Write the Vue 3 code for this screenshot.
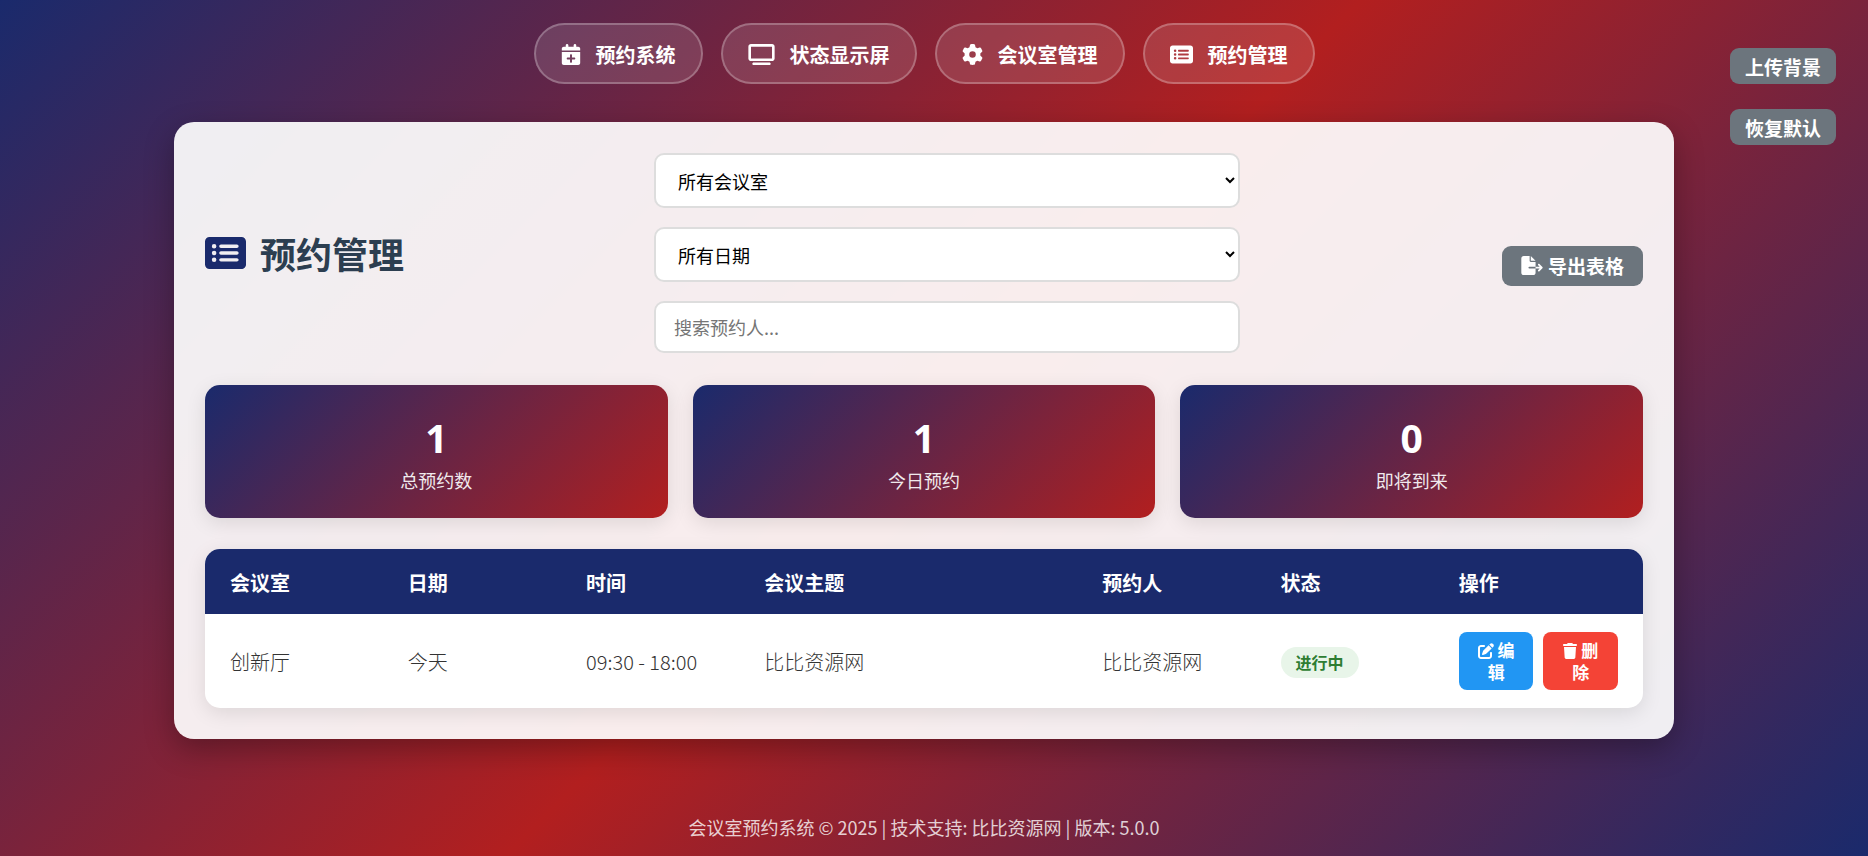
<script setup>
import { ref } from 'vue'

const icons = {
  calendar: {
    box: '0 0 448 512',
    path: 'M96 32V64H48C21.5 64 0 85.5 0 112v48H448V112c0-26.5-21.5-48-48-48H352V32c0-17.7-14.3-32-32-32s-32 14.3-32 32V64H160V32c0-17.7-14.3-32-32-32S96 14.3 96 32zM448 192H0V464c0 26.5 21.5 48 48 48H400c26.5 0 48-21.5 48-48V192zM224 248c13.3 0 24 10.7 24 24v56h56c13.3 0 24 10.7 24 24s-10.7 24-24 24H248v56c0 13.3-10.7 24-24 24s-24-10.7-24-24V376H144c-13.3 0-24-10.7-24-24s10.7-24 24-24h56V272c0-13.3 10.7-24 24-24z'
  },
  tv: {
    box: '0 0 640 512',
    path: 'M64 64V352H576V64H64zM0 64C0 28.7 28.7 0 64 0H576c35.3 0 64 28.7 64 64V352c0 35.3-28.7 64-64 64H64c-35.3 0-64-28.7-64-64V64zM128 448H512c17.7 0 32 14.3 32 32s-14.3 32-32 32H128c-17.7 0-32-14.3-32-32s14.3-32 32-32z'
  },
  gear: {
    box: '0 0 512 512',
    path: 'M495.9 166.6c3.2 8.7 .5 18.4-6.4 24.6l-43.3 39.4c1.1 8.3 1.7 16.8 1.7 25.4s-.6 17.1-1.7 25.4l43.3 39.4c6.9 6.2 9.6 15.9 6.4 24.6c-4.4 11.9-9.7 23.3-15.8 34.3l-4.7 8.1c-6.6 11-14 21.4-22.1 31.2c-5.9 7.2-15.7 9.6-24.5 6.8l-55.7-17.7c-13.4 10.3-28.2 18.9-44 25.4l-12.5 57.1c-2 9.1-9 16.3-18.2 17.8c-13.8 2.3-28 3.5-42.5 3.5s-28.7-1.2-42.5-3.5c-9.2-1.5-16.2-8.7-18.2-17.8l-12.5-57.1c-15.8-6.5-30.6-15.1-44-25.4L83.1 425.9c-8.8 2.8-18.6 .3-24.5-6.8c-8.1-9.8-15.5-20.2-22.1-31.2l-4.7-8.1c-6.1-11-11.4-22.4-15.8-34.3c-3.2-8.7-.5-18.4 6.4-24.6l43.3-39.4C64.6 273.1 64 264.6 64 256s.6-17.1 1.7-25.4L22.4 191.2c-6.9-6.2-9.6-15.9-6.4-24.6c4.4-11.9 9.7-23.3 15.8-34.3l4.7-8.1c6.6-11 14-21.4 22.1-31.2c5.9-7.2 15.7-9.6 24.5-6.8l55.7 17.7c13.4-10.3 28.2-18.9 44-25.4l12.5-57.1c2-9.1 9-16.3 18.2-17.8C227.3 1.2 241.5 0 256 0s28.7 1.2 42.5 3.5c9.2 1.5 16.2 8.7 18.2 17.8l12.5 57.1c15.8 6.5 30.6 15.1 44 25.4l55.7-17.7c8.8-2.8 18.6-.3 24.5 6.8c8.1 9.8 15.5 20.2 22.1 31.2l4.7 8.1c6.1 11 11.4 22.4 15.8 34.3zM256 336a80 80 0 1 0 0-160 80 80 0 1 0 0 160z'
  },
  list: {
    box: '0 0 576 512',
    path: 'M0 96C0 60.7 28.7 32 64 32H512c35.3 0 64 28.7 64 64V416c0 35.3-28.7 64-64 64H64c-35.3 0-64-28.7-64-64V96zM128 288a32 32 0 1 0 0-64 32 32 0 1 0 0 64zm32-128a32 32 0 1 0 -64 0 32 32 0 1 0 64 0zM128 384a32 32 0 1 0 0-64 32 32 0 1 0 0 64zm96-248c-13.3 0-24 10.7-24 24s10.7 24 24 24H448c13.3 0 24-10.7 24-24s-10.7-24-24-24H224zm0 96c-13.3 0-24 10.7-24 24s10.7 24 24 24H448c13.3 0 24-10.7 24-24s-10.7-24-24-24H224zm0 96c-13.3 0-24 10.7-24 24s10.7 24 24 24H448c13.3 0 24-10.7 24-24s-10.7-24-24-24H224z'
  }
}

const navItems = [
  { label: '预约系统', icon: 'calendar' },
  { label: '状态显示屏', icon: 'tv' },
  { label: '会议室管理', icon: 'gear' },
  { label: '预约管理', icon: 'list' }
]

const stats = [
  { value: 1, label: '总预约数' },
  { value: 1, label: '今日预约' },
  { value: 0, label: '即将到来' }
]

const columns = ['会议室', '日期', '时间', '会议主题', '预约人', '状态', '操作']

const bookings = [
  {
    room: '创新厅',
    date: '今天',
    time: '09:30 - 18:00',
    topic: '比比资源网',
    person: '比比资源网',
    status: '进行中'
  }
]

const room = ref('all')
const date = ref('all')
const keyword = ref('')
</script>

<template>
  <div class="page">
    <nav class="nav">
      <a v-for="item in navItems" :key="item.label" class="nav-link" href="#">
        <svg class="nav-icon" :class="item.icon" :viewBox="icons[item.icon].box" aria-hidden="true">
          <path :d="icons[item.icon].path" />
        </svg>
        <span>{{ item.label }}</span>
      </a>
    </nav>

    <div class="background-tools">
      <button class="tool-button" type="button">上传背景</button>
      <button class="tool-button" type="button">恢复默认</button>
    </div>

    <main class="panel">
      <header class="panel-header">
        <h1 class="title">
          <svg class="title-icon" viewBox="0 32 576 448" aria-hidden="true">
            <path :d="icons.list.path" />
          </svg>
          <span>预约管理</span>
        </h1>
        <div class="filters">
          <select v-model="room" class="field" aria-label="会议室">
            <option value="all">所有会议室</option>
            <option value="cx">创新厅</option>
          </select>
          <select v-model="date" class="field" aria-label="日期">
            <option value="all">所有日期</option>
            <option value="today">今天</option>
          </select>
          <input v-model="keyword" class="field search" type="text" placeholder="搜索预约人..." aria-label="搜索预约人" />
        </div>
        <button class="tool-button export" type="button">
          <svg class="export-icon" viewBox="0 0 576 512" aria-hidden="true">
            <path d="M0 64C0 28.7 28.7 0 64 0H224V128c0 17.7 14.3 32 32 32H384V288H216c-13.3 0-24 10.7-24 24s10.7 24 24 24H384V448c0 35.3-28.7 64-64 64H64c-35.3 0-64-28.7-64-64V64zM384 336V288H494.1l-39-39c-9.4-9.4-9.4-24.6 0-33.9s24.6-9.4 33.9 0l80 80c9.4 9.4 9.4 24.6 0 33.9l-80 80c-9.4 9.4-24.6 9.4-33.9 0s-9.4-24.6 0-33.9l39-39H384zm0-208H256V0L384 128z" />
          </svg>
          <span>导出表格</span>
        </button>
      </header>

      <section class="stats">
        <div v-for="stat in stats" :key="stat.label" class="stat">
          <div class="stat-value">{{ stat.value }}</div>
          <div class="stat-label">{{ stat.label }}</div>
        </div>
      </section>

      <div class="table-card">
        <table class="table">
          <colgroup>
            <col class="col-first" />
            <col class="col" />
            <col class="col" />
            <col class="col-wide" />
            <col class="col" />
            <col class="col" />
            <col />
          </colgroup>
          <thead>
            <tr>
              <th v-for="column in columns" :key="column" scope="col">{{ column }}</th>
            </tr>
          </thead>
          <tbody>
            <tr v-for="booking in bookings" :key="booking.room">
              <td>{{ booking.room }}</td>
              <td>{{ booking.date }}</td>
              <td>{{ booking.time }}</td>
              <td>{{ booking.topic }}</td>
              <td>{{ booking.person }}</td>
              <td><span class="status">{{ booking.status }}</span></td>
              <td>
                <div class="actions">
                  <button class="action edit" type="button">
                    <svg class="action-icon" viewBox="0 0 512 512" aria-hidden="true">
                      <path d="M471.6 21.7c-21.9-21.9-57.3-21.9-79.2 0L362.3 51.7l97.9 97.9 30.1-30.1c21.9-21.9 21.9-57.3 0-79.2L471.6 21.7zm-299.2 220c-6.1 6.1-10.8 13.6-13.5 21.9l-29.6 88.8c-2.9 8.6-.6 18.1 5.8 24.6s15.9 8.7 24.6 5.8l88.8-29.6c8.2-2.7 15.7-7.4 21.9-13.5L437.7 172.3 339.7 74.3 172.4 241.7zM96 64C43 64 0 107 0 160V416c0 53 43 96 96 96H352c53 0 96-43 96-96V320c0-17.7-14.3-32-32-32s-32 14.3-32 32v96c0 17.7-14.3 32-32 32H96c-17.7 0-32-14.3-32-32V160c0-17.7 14.3-32 32-32h96c17.7 0 32-14.3 32-32s-14.3-32-32-32H96z" />
                    </svg>
                    编辑
                  </button>
                  <button class="action delete" type="button">
                    <svg class="action-icon narrow" viewBox="0 0 448 512" aria-hidden="true">
                      <path d="M135.2 17.7L128 32H32C14.3 32 0 46.3 0 64S14.3 96 32 96H416c17.7 0 32-14.3 32-32s-14.3-32-32-32H320l-7.2-14.3C307.4 6.8 296.3 0 284.2 0H163.8c-12.1 0-23.2 6.8-28.6 17.7zM416 128H32L53.2 467c1.6 25.3 22.6 45 47.9 45H346.9c25.3 0 46.3-19.7 47.9-45L416 128z" />
                    </svg>
                    删除
                  </button>
                </div>
              </td>
            </tr>
          </tbody>
        </table>
      </div>
    </main>

    <footer class="footer">会议室预约系统 © 2025 | 技术支持: 比比资源网 | 版本: 5.0.0</footer>
  </div>
</template>

<style>
body {
  margin: 0;
}
</style>

<style scoped>
.page,
.page * {
  box-sizing: border-box;
}

.page {
  position: relative;
  display: flex;
  flex-direction: column;
  align-items: center;
  min-height: 100vh;
  padding: 23px 20px 16px 0;
  background: linear-gradient(135deg, #1a2a6c, #b21f1f, #1a2a6c);
  color: #333;
  font-family: "Noto Sans CJK SC", "Noto Sans", sans-serif;
  font-size: 20px;
}

svg {
  fill: currentColor;
}

button,
input,
select {
  font-family: inherit;
}

button {
  border: 0;
  color: #fff;
  font-weight: 700;
  cursor: pointer;
}

.nav {
  display: flex;
  gap: 18px;
}

.nav-link {
  display: flex;
  align-items: center;
  gap: 15px;
  padding: 16px 25px 14px;
  border: 2px solid rgba(255, 255, 255, 0.25);
  border-radius: 31px;
  background: rgba(255, 255, 255, 0.12);
  color: #fff;
  font-weight: 700;
  line-height: 27px;
  text-decoration: none;
}

.nav-icon {
  width: 21px;
  height: 21px;
}

.nav-icon.calendar {
  width: 20px;
}

.nav-icon.tv {
  width: 27px;
}

.nav-icon.list {
  width: 23px;
}

.background-tools {
  position: absolute;
  top: 48px;
  right: 32px;
  display: flex;
  flex-direction: column;
  gap: 25px;
}

.tool-button {
  padding: 5px 15px 3px;
  border-radius: 9px;
  background: #6c757d;
  font-size: 19px;
  line-height: 28px;
}

.panel {
  width: calc(100% - 40px);
  max-width: 1500px;
  margin-top: 38px;
  padding: 31px;
  border-radius: 20px;
  background: rgba(255, 255, 255, 0.92);
  box-shadow: 0 10px 30px rgba(0, 0, 0, 0.3);
}

.panel-header {
  display: flex;
  justify-content: space-between;
  align-items: center;
}

.title {
  display: flex;
  align-items: center;
  gap: 14px;
  margin: 0;
  color: #2c3e50;
  font-size: 36px;
  line-height: 48px;
}

.title-icon {
  width: 41px;
  height: 32px;
  color: #1a2a6c;
}

.filters {
  display: flex;
  flex: 0 1 586px;
  flex-direction: column;
  gap: 19px;
}

.field {
  width: 100%;
  height: 55px;
  padding: 0 18px;
  border: 2px solid #ddd;
  border-radius: 10px;
  background: #fff;
  color: #000;
  font-size: 18px;
}

.search {
  height: 52px;
}

.search::placeholder {
  color: #757575;
}

.export {
  display: flex;
  align-items: center;
  gap: 5px;
  margin: 25px 0 0 12px;
  padding: 6px 19px;
}

.export-icon {
  width: 22px;
  height: 19px;
}

.stats {
  display: grid;
  grid-template-columns: repeat(3, 1fr);
  gap: 25px;
  margin-top: 32px;
}

.stat {
  padding: 27px 25px 23px;
  border-radius: 15px;
  background: linear-gradient(135deg, #1a2a6c, #b21f1f);
  box-shadow: 0 5px 20px rgba(0, 0, 0, 0.1);
  color: #fff;
  text-align: center;
}

.stat-value {
  font-family: "Noto Sans", sans-serif;
  font-size: 39px;
  font-weight: 700;
  line-height: 52px;
}

.stat-label {
  padding-top: 1px;
  font-size: 18px;
  line-height: 30px;
  opacity: 0.9;
}

.table-card {
  margin-top: 31px;
  overflow: hidden;
  border-radius: 15px;
  background: #fff;
  box-shadow: 0 5px 20px rgba(0, 0, 0, 0.1);
}

.table {
  width: 100%;
  border-collapse: collapse;
  table-layout: fixed;
}

.col-first {
  width: 14.1%;
}

.col {
  width: 12.4%;
}

.col-wide {
  width: 23.5%;
}

th,
td {
  padding: 18px 18px 18px 0;
  text-align: left;
  line-height: 29px;
}

th:first-child,
td:first-child {
  padding-left: 25px;
}

th:last-child,
td:last-child {
  padding-right: 25px;
}

th {
  padding-top: 19px;
  padding-bottom: 17px;
  background: #1a2a6c;
  color: #fff;
  font-weight: 700;
}

td {
  font-weight: 300;
}

.status {
  display: inline-block;
  padding: 0 15px;
  border-radius: 16px;
  background: #e8f5e9;
  color: #2e7d32;
  font-size: 16px;
  font-weight: 600;
  line-height: 31px;
  vertical-align: middle;
}

.actions {
  display: flex;
  gap: 10px;
}

.action {
  flex: 1;
  padding: 7px 15px;
  border-radius: 8px;
  font-size: 17px;
  line-height: 22px;
}

.action-icon {
  width: 16px;
  height: 16px;
  vertical-align: -2px;
}

.action-icon.narrow {
  width: 14px;
}

.edit {
  background: #2196f3;
}

.delete {
  background: #f44336;
}

.footer {
  margin-top: auto;
  color: rgba(255, 255, 255, 0.8);
  font-size: 18px;
  line-height: 26px;
}
</style>
